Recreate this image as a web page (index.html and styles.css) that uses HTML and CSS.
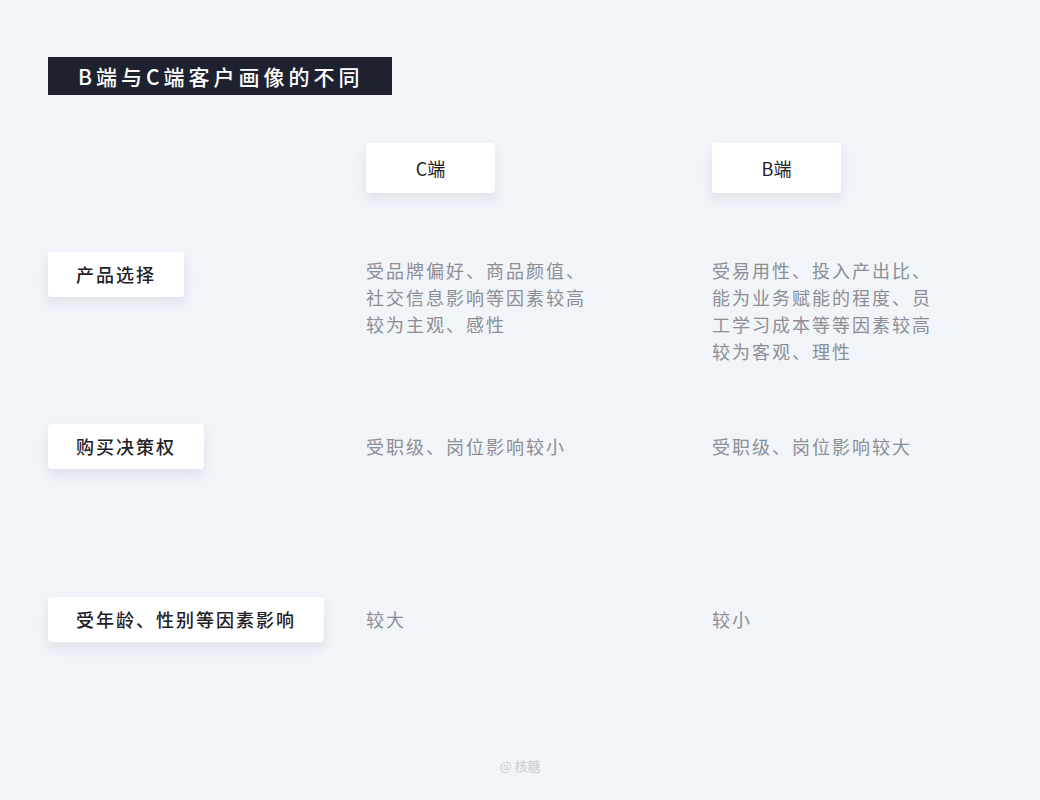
FILE: index.html
```html
<!DOCTYPE html>
<html lang="zh-CN">
<head>
    <meta charset="UTF-8">
    <meta name="viewport" content="width=device-width, initial-scale=1.0">
    <title>B端与C端客户画像的不同</title>
    <link rel="stylesheet" href="styles.css">
</head>
<body>

<div class="page">
    <h1 class="title">B端与C端客户画像的不同</h1>

    <div class="compare">
        <div class="blank"></div>
        <div class="head-card">C端</div>
        <div class="head-card">B端</div>

        <div class="label-card">产品选择</div>
        <p class="value value-top">受品牌偏好、商品颜值、社交信息影响等因素较高较为主观、感性</p>
        <p class="value value-top">受易用性、投入产出比、能为业务赋能的程度、员工学习成本等等因素较高较为客观、理性</p>

        <div class="label-card">购买决策权</div>
        <p class="value">受职级、岗位影响较小</p>
        <p class="value">受职级、岗位影响较大</p>

        <div class="label-card">受年龄、性别等因素影响</div>
        <p class="value">较大</p>
        <p class="value">较小</p>
    </div>

    <div class="footer">@ 核糖</div>
</div>

</body>
</html>
```

FILE: styles.css
```css
* {
    box-sizing: border-box;
}
body {
    margin: 0;
    background: #f1f4f9;
    font-family: "Noto Sans CJK SC", "Noto Sans", sans-serif;
    color: #1f2128;
}
.page {
    width: 1040px;
    height: 800px;
    padding: 57px 0 0 48px;
}
.title {
    display: inline-block;
    margin: 0;
    height: 38px;
    line-height: 38px;
    padding: 0 28px 0 30px;
    background: #1e2230;
    color: #fff;
    font-size: 21px;
    font-weight: 500;
    letter-spacing: 4px;
}
.compare {
    display: grid;
    grid-template-columns: 318px 346px 1fr;
    grid-template-rows: 109px 172px 173px auto;
    align-items: start;
    margin-top: 48px;
}
.head-card, .label-card {
    background: #fff;
    border-radius: 4px;
    box-shadow: 0 6px 12px rgba(90, 100, 130, 0.12);
    font-size: 18px;
    color: #1f2128;
}
.head-card {
    width: 129px;
    height: 50px;
    line-height: 50px;
    text-align: center;
    font-weight: 400;
}
.label-card {
    justify-self: start;
    height: 45px;
    line-height: 45px;
    padding: 0 28px;
    font-weight: 500;
    letter-spacing: 2px;
    white-space: nowrap;
}
.value {
    margin: 9px 0 0;
    width: 226px;
    font-size: 18px;
    line-height: 27px;
    letter-spacing: 2px;
    font-weight: 400;
    color: #8b8e95;
}
.value-top {
    margin-top: 5px;
}
.footer {
    margin: 115px 0 0 -48px;
    text-align: center;
    font-size: 13px;
    line-height: 18px;
    color: #c9cdd4;
}
```
